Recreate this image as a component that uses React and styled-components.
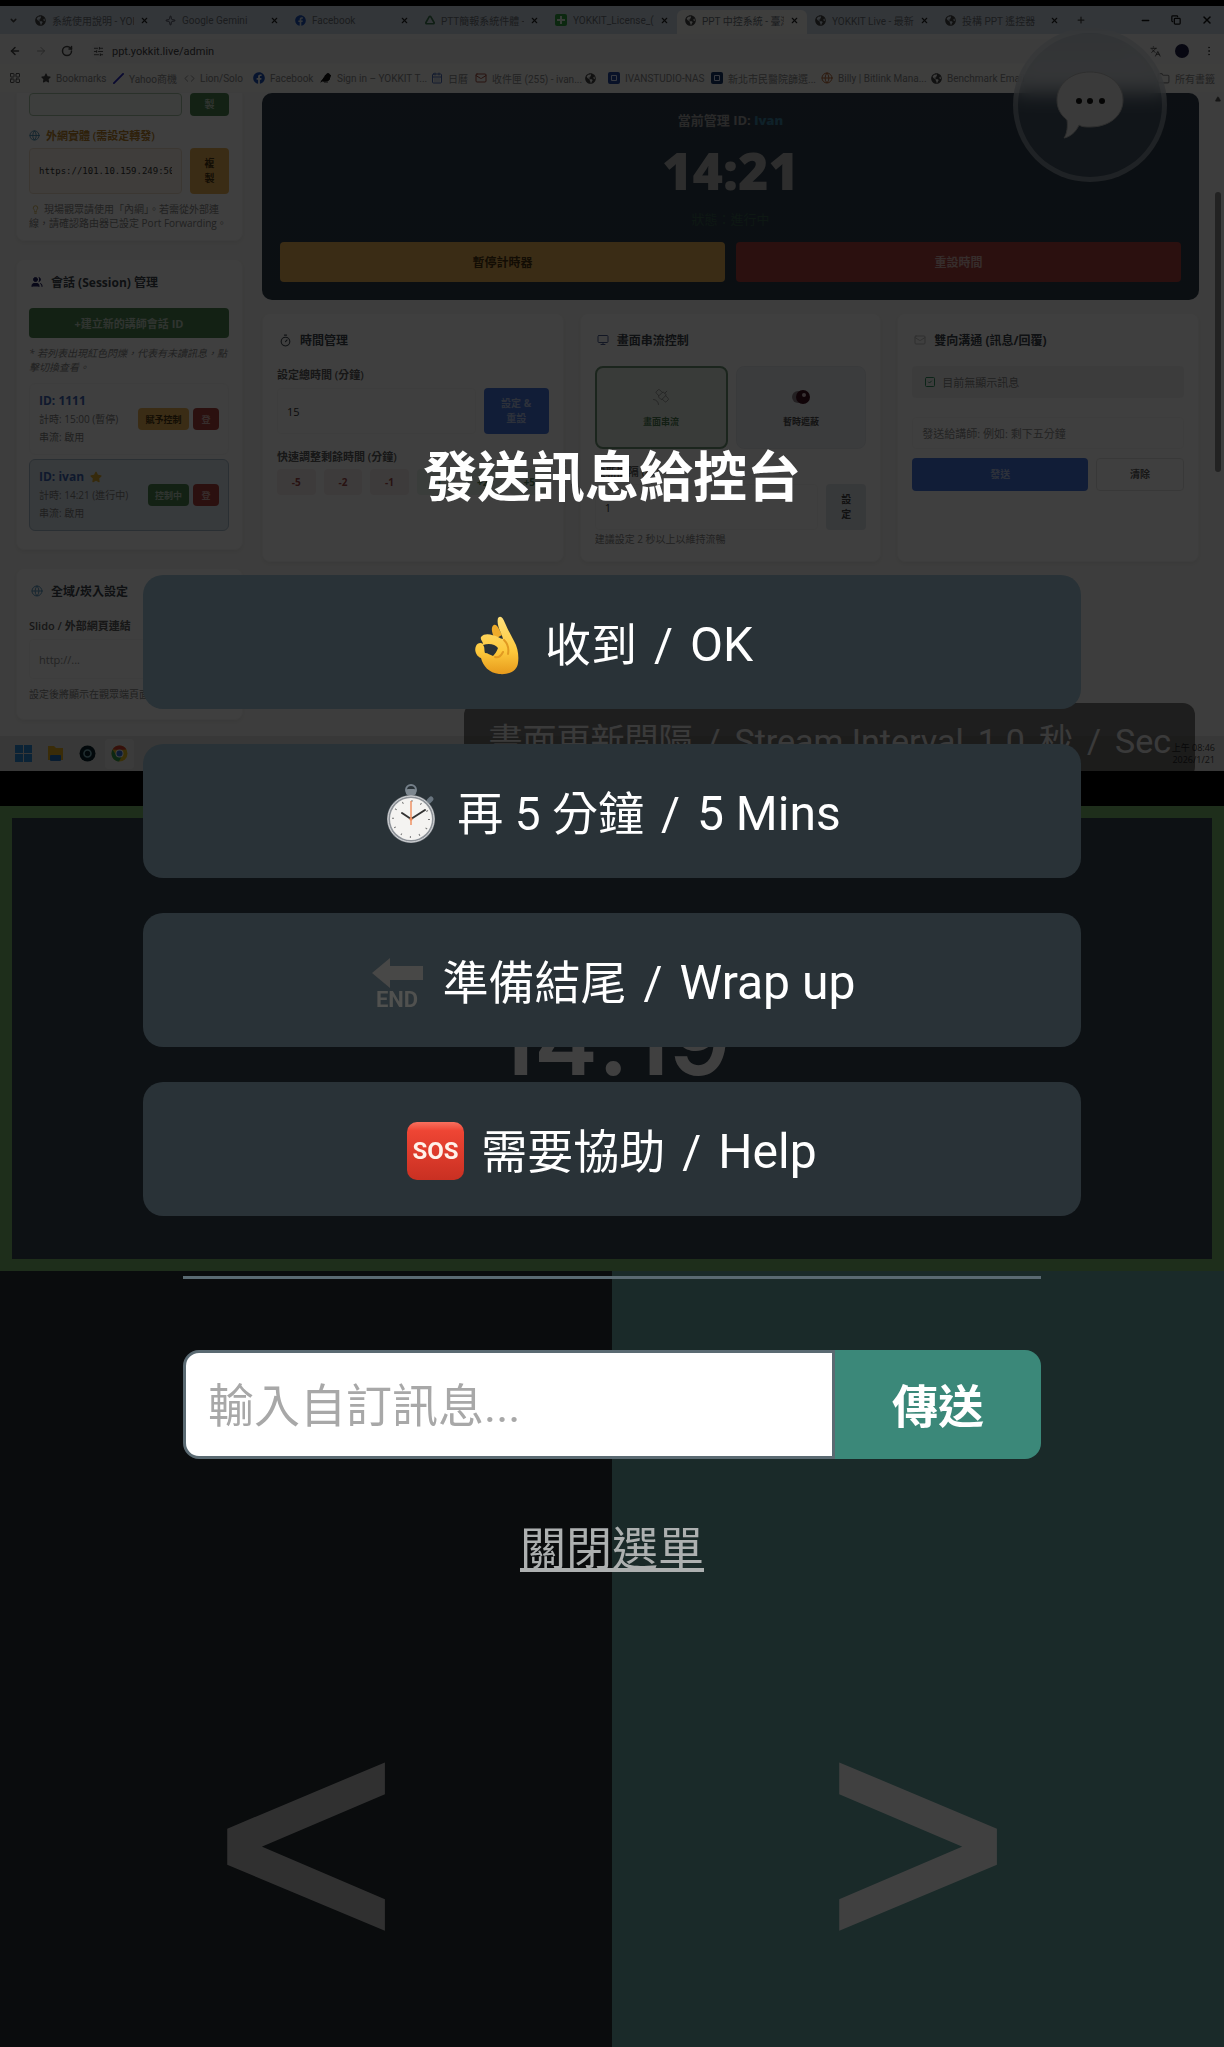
/* eslint-disable no-unused-vars */
import React from 'react'
import styled, { createGlobalStyle, css } from 'styled-components'
import {
  ArrowLeft, ArrowRight, RotateCw, SlidersHorizontal, X, Plus, Minus, Copy,
  ChevronDown, LayoutGrid, Globe, Folder, EllipsisVertical, Languages,
  Users, Timer, Monitor, Mail, Satellite, SquareCheck, Lightbulb, Triangle,
  Sparkle, CalendarDays, Slash, Code, Bird
} from 'lucide-react'
import { FaFacebook, FaGlobeAmericas, FaStar } from 'react-icons/fa'

const GlobalStyle = createGlobalStyle`
  * {
    box-sizing: border-box;
  }
  body {
    margin: 0;
    background: #000;
    font-family: Roboto, 'Noto Sans CJK TC', sans-serif;
  }
  button, input {
    font-family: inherit;
    margin: 0;
  }
  h1, h2, p {
    margin: 0;
  }
  svg {
    flex: none;
  }
`

const Page = styled.main`
  position: relative;
  min-height: 100vh;
  display: flex;
  flex-direction: column;
  padding-top: 6px;
  overflow: hidden;
`

/* ---------- streamed desktop ---------- */

const Stream = styled.section`
  position: relative;
  display: flex;
  flex-direction: column;
  background: #f3f3f2;
  font-family: 'Open Sans', 'Noto Sans CJK TC', sans-serif;
  font-size: 10px;
  color: #444;
`

const TabStrip = styled.div`
  display: flex;
  align-items: flex-end;
  height: 28px;
  background: #ccd8e4;
  font-family: Roboto, 'Noto Sans CJK TC', sans-serif;
`

const TabMenu = styled.div`
  width: 27px;
  height: 28px;
  display: flex;
  align-items: center;
  justify-content: center;
`

const Tab = styled.div`
  flex: 0 1 130px;
  min-width: 0;
  height: 24px;
  padding: 0 8px 4px 8px;
  display: flex;
  align-items: center;
  gap: 6px;
  border-radius: 6px 6px 0 0;
  color: #6c7278;
  ${({ $active }) => $active && css`
    background: #f6f6f4;
  `}
  span {
    flex: 1;
    overflow: hidden;
    white-space: nowrap;
  }
`

const WindowButtons = styled.div`
  margin-left: auto;
  height: 28px;
  padding-right: 11px;
  display: flex;
  align-items: center;
  gap: 20px;
`

const Toolbar = styled.div`
  display: flex;
  align-items: center;
  height: 30px;
  padding: 4px 9px 0;
  gap: 14px;
  background: #f4f4f4;
`

const Address = styled.div`
  flex: 1;
  height: 24px;
  margin-left: 4px;
  padding-left: 2px;
  display: flex;
  align-items: center;
  gap: 8px;
  border-radius: 12px;
  background: #eeeef0;
  font: 11px Roboto, sans-serif;
`

const Avatar = styled.span`
  width: 14px;
  height: 14px;
  border-radius: 50%;
  background: #1c1c44;
`

const Bookmarks = styled.div`
  display: flex;
  align-items: center;
  height: 28px;
  padding: 0 9px;
  background: #f6f6f4;
  font-family: Roboto, 'Noto Sans CJK TC', sans-serif;
  color: #888;
`

const Bookmark = styled.span`
  width: ${({ $w }) => ($w ? `${$w}px` : 'auto')};
  margin-left: ${({ $end }) => ($end ? 'auto' : '0')};
  display: flex;
  align-items: center;
  gap: 5px;
  white-space: nowrap;
`

const Desktop = styled.div`
  display: grid;
  grid-template-columns: 227px minmax(0, 1fr) 12px;
  height: 644px;
  padding-left: 16px;
  overflow: hidden;
`

const Sidebar = styled.div`
  display: flex;
  flex-direction: column;
  gap: 18px;
`

const Main = styled.div`
  display: flex;
  flex-direction: column;
  gap: 13px;
  padding: 1px 13px 0 19px;
`

const ScrollBar = styled.div`
  display: flex;
  flex-direction: column;
  align-items: center;
  padding: 4px 0;
  gap: 90px;
  &::after {
    content: '';
    width: 6px;
    height: 280px;
    border-radius: 3px;
    background: #888;
  }
`

const Card = styled.section`
  padding: 12px 13px 18px 12px;
  border-radius: 8px;
  border: 1px solid #f4f4f4;
  background: #fbfbfa;
  box-shadow: 0 2px 4px rgba(0, 0, 0, 0.06);
  ${({ $clipped }) => $clipped && css`
    height: 149px;
    padding-top: 0;
    border-radius: 0 0 8px 8px;
  `}
  ${({ $column }) => $column && css`
    height: 249px;
    padding: 16px 14px;
  `}
`

const CardTitle = styled.h2`
  display: flex;
  align-items: center;
  gap: 8px;
  height: 20px;
  padding-left: 2px;
  font-size: 12px;
  font-weight: 700;
  color: #3c444c;
  white-space: nowrap;
  margin-bottom: 16px;
`

const FieldLabel = styled.label`
  display: flex;
  align-items: center;
  gap: 6px;
  height: 16px;
  font-size: 11px;
  font-weight: 600;
  white-space: nowrap;
  color: ${({ $color }) => $color || '#5c5c5c'};
`

const Row = styled.div`
  display: flex;
  gap: 8px;
  margin-top: ${({ $top }) => $top || 0}px;
`

const Field = styled.input`
  flex: 1;
  min-width: 0;
  height: ${({ $h }) => $h || 46}px;
  padding: 0 9px;
  border: 1px solid ${({ $line }) => $line || '#f4f4f4'};
  border-radius: 4px;
  background: ${({ $fill }) => $fill || '#fbfbfa'};
  color: #333;
  font-size: ${({ $mono }) => ($mono ? 9 : 11)}px;
  ${({ $mono }) => $mono && css`
    font-family: 'DejaVu Sans Mono', monospace;
  `}
  &::placeholder {
    color: #8c8c8c;
    opacity: 1;
  }
`

const tones = {
  green: '#4c8450;color:#c0d0c0',
  yellow: '#e8b054;color:#4a3410',
  red: '#ac403c;color:#d8b4b0',
  blue: '#4474dc;color:#b4c4e8',
  slate: '#dce2e8;color:#444',
  pink: '#f4ebeb;color:#a04848',
  mint: '#e8f2ea;color:#508058',
  plain: '#fbfbfa;color:#5c5c5c'
}

const Action = styled.button`
  flex: ${({ $w }) => ($w ? `0 0 ${$w}px` : '1')};
  height: ${({ $h }) => $h}px;
  padding: 0 4px;
  border: ${({ $tone }) => ($tone === 'plain' ? '1px solid #e0e0e0' : '0')};
  border-radius: 4px;
  font-size: ${({ $size }) => $size || 10}px;
  font-weight: 700;
  line-height: 15px;
  background: ${({ $tone }) => tones[$tone]};
`

const Note = styled.p`
  margin-top: ${({ $top }) => $top || 8}px;
  font-size: 10px;
  line-height: 14px;
  color: #848484;
  font-style: ${({ $italic }) => ($italic ? 'italic' : 'normal')};
  overflow: hidden;
  ${({ $nowrap }) => $nowrap && 'white-space: nowrap;'}
  svg {
    vertical-align: -1px;
    margin: 0 4px 0 2px;
  }
`

const Session = styled.div`
  display: flex;
  align-items: center;
  gap: 4px;
  height: 72px;
  padding: 0 9px;
  margin-top: ${({ $top }) => $top}px;
  border: 1px solid ${({ $active }) => ($active ? '#a8bccc' : '#f4f4f4')};
  border-radius: 6px;
  background: ${({ $active }) => ($active ? '#dce6ee' : '#f9f9f9')};
`

const SessionInfo = styled.div`
  flex: 1;
  line-height: 18px;
  white-space: nowrap;
  color: #7c7c7c;
  strong {
    display: flex;
    align-items: center;
    gap: 6px;
    font-size: 12px;
    color: #3c64b4;
  }
`

const Banner = styled.section`
  height: 207px;
  padding: 18px;
  display: flex;
  flex-direction: column;
  align-items: center;
  border-radius: 10px;
  background: linear-gradient(#303e4c, #2c3c4a);
  color: #a4a4a4;
`

const BannerTitle = styled.p`
  font-size: 13px;
  line-height: 18px;
  font-weight: 700;
  b {
    color: #3c84a4;
  }
`

const Clock = styled.p`
  font-size: 52px;
  line-height: 64px;
  margin-top: 9px;
  font-weight: 800;
  color: #b4b4b4;
`

const Status = styled.p`
  font-size: 13px;
  line-height: 18px;
  margin-top: 8px;
  color: #38604c;
`

const BannerActions = styled.div`
  align-self: stretch;
  display: flex;
  gap: 11px;
  margin-top: 14px;
`

const Columns = styled.div`
  display: grid;
  grid-template-columns: repeat(3, minmax(0, 1fr));
  gap: 16px;
`

const Mode = styled.button`
  flex: 1;
  height: 83px;
  display: flex;
  flex-direction: column;
  align-items: center;
  justify-content: center;
  gap: 8px;
  border-radius: 8px;
  font-size: 9px;
  font-weight: 700;
  border: ${({ $on }) => ($on ? '2px solid #6c9474' : '1px solid #e4e8ec')};
  background: ${({ $on }) => ($on ? '#e4ebe3' : '#eceff3')};
  color: ${({ $on }) => ($on ? '#4c7c50' : '#4c4c4c')};
`

const Empty = styled.p`
  display: flex;
  align-items: center;
  gap: 6px;
  height: 32px;
  padding: 0 12px;
  border-radius: 4px;
  background: #f0f0f0;
  color: #848484;
  font-size: 11px;
`

const Taskbar = styled.div`
  display: flex;
  align-items: center;
  height: 35px;
  padding: 0 9px;
  gap: 3px;
  background: #e0dfdd;
`

const TaskIcon = styled.span`
  width: 29px;
  height: 30px;
  display: flex;
  align-items: center;
  justify-content: center;
  border-radius: 4px;
  background: ${({ $active }) => ($active ? '#ececec' : 'none')};
`

const TrayClock = styled.p`
  margin-left: auto;
  font-size: 9px;
  line-height: 12px;
  text-align: right;
`

const StreamBadge = styled.p`
  position: absolute;
  right: 29px;
  bottom: -8px;
  padding: 14px 24px;
  border-radius: 12px;
  background: rgba(0, 0, 0, 0.5);
  color: #e8e8e8;
  font: 34px/48px Roboto, 'Noto Sans CJK TC', sans-serif;
  display: flex;
  gap: 14px;
  white-space: nowrap;
`

const ChatButton = styled.button`
  position: absolute;
  top: 22px;
  right: 57px;
  width: 154px;
  height: 154px;
  display: flex;
  align-items: center;
  justify-content: center;
  border: 5px solid rgba(255, 255, 255, 0.3);
  border-radius: 50%;
  background: rgba(120, 140, 160, 0.3);
  backdrop-filter: blur(10px);
`

/* ---------- presenter controls ---------- */

const TimerPanel = styled.section`
  height: 465px;
  margin-top: 35px;
  display: flex;
  align-items: center;
  justify-content: center;
  border: 12px solid #78b86c;
  background: #344450;
`

const TimeLeft = styled.p`
  font: 600 96px/100px Inter, sans-serif;
  font-feature-settings: 'calt' 0;
  padding-top: 2px;
  color: #fff;
`

const SlideNav = styled.nav`
  flex: 1;
  display: grid;
  grid-template-columns: 1fr 1fr;
  min-height: 776px;
`

const SlideButton = styled.button`
  display: flex;
  justify-content: center;
  padding: 370px 0 0;
  border: 0;
  background: ${({ $next }) => ($next ? '#68a8a4' : '#283034')};
  color: ${({ $next }) => ($next ? '#fff' : '#c0c0c0')};
  font: 308px/400px 'Liberation Sans', sans-serif;
  -webkit-text-stroke: 8px currentColor;
`

/* ---------- message menu ---------- */

const Overlay = styled.div`
  position: absolute;
  inset: 0;
  display: flex;
  justify-content: center;
  padding-top: 448px;
  background: rgba(0, 0, 0, 0.75);
`

const Menu = styled.div`
  width: calc(100% - 64px);
  max-width: 938px;
  display: flex;
  flex-direction: column;
`

const MenuTitle = styled.h1`
  font-size: 54px;
  line-height: 62px;
  font-weight: 700;
  color: #fff;
  text-align: center;
`

const Replies = styled.div`
  display: grid;
  gap: 35px;
  margin-top: 65px;
`

const Reply = styled.button`
  height: 134px;
  padding: 6px 0 0;
  display: flex;
  align-items: center;
  justify-content: center;
  gap: 17px;
  border: 0;
  border-radius: 20px;
  background: #293237;
  color: #fff;
  font-size: 46px;
  line-height: 60px;
`

const English = styled.span`
  font-size: 48px;
`

const Custom = styled.form`
  margin: 60px 40px 0;
  padding-top: 71px;
  border-top: 3px solid #5a6a72;
  display: flex;
`

const MessageInput = styled.input`
  flex: 1;
  min-width: 0;
  height: 109px;
  padding: 2px 22px 0;
  border: 3px solid #5a6a72;
  border-radius: 16px 0 0 16px;
  background: #fff;
  font-size: 46px;
  &::placeholder {
    color: #a8a8a8;
    opacity: 1;
  }
`

const SendButton = styled.button`
  width: 206px;
  padding: 0 0 4px;
  border: 0;
  border-radius: 0 16px 16px 0;
  background: #3b8879;
  color: #fff;
  font-size: 46px;
  font-weight: 700;
`

const CloseButton = styled.button`
  align-self: center;
  margin-top: 63px;
  padding: 0;
  border: 0;
  background: none;
  color: #adb0b0;
  font-size: 46px;
  line-height: 54px;
  text-decoration: underline;
`

/* ---------- drawings ---------- */

const OkHand = () => (
  <svg width='57' height='60' viewBox='0 0 57 60' aria-hidden='true'>
    <defs>
      <linearGradient id='skin' x1='0' y1='0' x2='0' y2='1'>
        <stop offset='0' stopColor='#ffe07a' />
        <stop offset='0.6' stopColor='#fdc93c' />
        <stop offset='1' stopColor='#e79a1c' />
      </linearGradient>
    </defs>
    <path d='M24 24C20 17 20 11 23 10c3-1 5 4 8 10z' fill='#eeab2a' />
    <path
      fillRule='evenodd'
      fill='url(#skin)'
      d='M27 3c3-3 5 0 7 5 3 7 6 12 9 18 4 7 5 15 4 22-1 8-9 12-19 11C18 58 12 51 10 43 5 41 3 35 5 31c1-3 5-4 7-2 0-3-3-4-2-7 4-5 12-2 17 0 2 1 4 2 5 2-1-6-7-13-5-21zM12 30c2 2 1 5 2 8 3 0 5 2 8 3 2-2 4-5 5-8-3-4-9-5-15-3z'
    />
    <path d='M33 25c4 4 5 9 4 14M24 42c3 1 6-1 8-5' fill='none' stroke='#e19a22' strokeWidth='2' strokeLinecap='round' />
  </svg>
)

const StopWatch = () => (
  <svg width='57' height='60' viewBox='0 0 57 60' aria-hidden='true'>
    <circle cx='28' cy='6' r='5' fill='none' stroke='#75808a' strokeWidth='2' />
    <rect x='23' y='5' width='10' height='6' rx='2' fill='#7e8890' />
    <path d='M46 17l2-2' stroke='#68747e' strokeWidth='5' strokeLinecap='round' />
    <circle cx='28' cy='35' r='24' fill='#8d9298' />
    <circle cx='28' cy='35' r='23' fill='none' stroke='#d4d6d8' strokeWidth='1' />
    <circle cx='28' cy='35' r='21' fill='#f4f3f1' />
    <circle cx='28' cy='35' r='18' fill='none' stroke='#777' strokeWidth='2' strokeDasharray='1 8.42' />
    <path d='M28 35l-9-6M28 35l14-9' stroke='#333' strokeWidth='2' strokeLinecap='round' />
    <path d='M28 17v24' stroke='#ee8a5a' strokeWidth='1.4' />
    <circle cx='28' cy='35' r='1.6' fill='#ee8a5a' />
  </svg>
)

const EndArrow = () => (
  <svg width='57' height='60' viewBox='0 0 57 60' aria-hidden='true'>
    <path d='M3 20L21 5v8h33v14H21v8z' fill='#484847' />
    <text x='28' y='54' textAnchor='middle' fontFamily='Roboto, sans-serif' fontWeight='700' fontSize='22' fill='#50514f'>END</text>
  </svg>
)

const Sos = () => (
  <svg width='57' height='60' viewBox='0 0 57 60' aria-hidden='true'>
    <defs>
      <linearGradient id='sos' x1='0' y1='0' x2='0' y2='1'>
        <stop offset='0' stopColor='#f8705e' />
        <stop offset='0.15' stopColor='#ee4534' />
        <stop offset='1' stopColor='#c93022' />
      </linearGradient>
    </defs>
    <rect x='0' y='0' width='57' height='58' rx='10' fill='url(#sos)' />
    <text x='28.5' y='37' textAnchor='middle' fontFamily='Roboto, sans-serif' fontWeight='700' fontSize='24' fill='#fff2ea'>SOS</text>
  </svg>
)

const Bubble = () => (
  <svg width='68' height='68' viewBox='0 0 68 68' aria-hidden='true'>
    <path d='M34 1c19 0 33 12 33 28S53 56 34 56c-4 0-8 0-11-2C20 61 14 66 8 67c3-4 4-12 3-18C5 44 1 38 1 29 1 13 15 1 34 1z' fill='#e8e8e6' stroke='#b8b8b8' />
    <circle cx='23' cy='30' r='3' fill='#111' />
    <circle cx='34' cy='30' r='3' fill='#111' />
    <circle cx='46' cy='30' r='3' fill='#111' />
  </svg>
)

const WindowsLogo = () => (
  <svg width='17' height='17' viewBox='0 0 17 17' fill='#2c8cd8' aria-hidden='true'>
    <path d='M0 0h8v8H0zM9 0h8v8H9zM0 9h8v8H0zM9 9h8v8H9z' />
  </svg>
)

const Explorer = () => (
  <svg width='17' height='17' viewBox='0 0 17 17' aria-hidden='true'>
    <path d='M1 1h6l2 2h7v12H1z' fill='#e8b020' />
    <rect x='3' y='10' width='11' height='6' rx='1' fill='#2070c0' />
  </svg>
)

const Swirl = () => (
  <svg width='17' height='17' viewBox='0 0 17 17' aria-hidden='true'>
    <circle cx='8.5' cy='8.5' r='8' fill='#08222c' />
    <circle cx='8.5' cy='8.5' r='3.5' fill='none' stroke='#7cb0bc' strokeWidth='1.6' />
  </svg>
)

const ChromeLogo = () => (
  <svg width='17' height='17' viewBox='0 0 17 17' aria-hidden='true'>
    <circle cx='8.5' cy='8.5' r='8' fill='#e8c020' />
    <path d='M1.6 4.5A8 8 0 0 1 15.4 4.5L8.5 5z' fill='#d84030' />
    <path d='M1.6 4.5A8 8 0 0 0 8 16.5l3.5-6.5H5z' fill='#30a050' />
    <circle cx='8.5' cy='8.5' r='4' fill='#fff' />
    <circle cx='8.5' cy='8.5' r='3' fill='#3070d8' />
  </svg>
)

const Tile = ({ color }) => (
  <svg width='12' height='12' viewBox='0 0 12 12' aria-hidden='true'>
    <rect width='12' height='12' rx='2' fill={color} />
    <path d='M3.5 3.5h5v5h-5z' fill='none' stroke='#dde8ff' />
  </svg>
)

const Sheet = () => (
  <svg width='12' height='12' viewBox='0 0 12 12' aria-hidden='true'>
    <rect width='12' height='12' rx='2' fill='#30a040' />
    <path d='M6 2v8M2 6h8' stroke='#e0f0e0' strokeWidth='2' />
  </svg>
)

const GlobeDot = () => <FaGlobeAmericas size={11} color='#444' />

const tabs = [
  { icon: <GlobeDot />, title: '系統使用說明 - YOK' },
  { icon: <Sparkle size={11} color='#445' />, title: 'Google Gemini' },
  { icon: <FaFacebook size={11} color='#1c50b8' />, title: 'Facebook' },
  { icon: <Triangle size={10} color='#3c7850' strokeWidth={4} />, title: 'PTT簡報系統件體 -' },
  { icon: <Sheet />, title: 'YOKKIT_License_(T' },
  { icon: <GlobeDot />, title: 'PPT 中控系統 - 臺灣', active: true },
  { icon: <GlobeDot />, title: 'YOKKIT Live - 最新' },
  { icon: <GlobeDot />, title: '投構 PPT 遙控器' }
]

const bookmarks = [
  { w: 72, icon: <FaStar size={10} color='#444' />, title: 'Bookmarks' },
  { w: 71, icon: <Slash size={11} color='#2828c0' strokeWidth={4} />, title: 'Yahoo商機' },
  { w: 69, icon: <Code size={11} color='#888' />, title: 'Lion/Solo' },
  { w: 67, icon: <FaFacebook size={12} color='#1c50b8' />, title: 'Facebook' },
  { w: 111, icon: <Bird size={12} color='#111' fill='#111' />, title: 'Sign in – YOKKIT T...' },
  { w: 44, icon: <CalendarDays size={12} color='#4c6cb8' />, title: '日曆' },
  { w: 110, icon: <Mail size={12} color='#a04838' />, title: '收件匣 (255) - ivan...' },
  { w: 23, icon: <GlobeDot />, title: '' },
  { w: 103, icon: <Tile color='#2448a0' />, title: 'IVANSTUDIO-NAS' },
  { w: 110, icon: <Tile color='#143468' />, title: '新北市民醫院篩選...' },
  { w: 110, icon: <Globe size={12} color='#b86838' />, title: 'Billy | Bitlink Mana...' },
  { w: 90, icon: <GlobeDot />, title: 'Benchmark Email' }
]

const replies = [
  { icon: <OkHand />, zh: '收到', en: 'OK' },
  { icon: <StopWatch />, zh: '再 5 分鐘', en: '5 Mins' },
  { icon: <EndArrow />, zh: '準備結尾', en: 'Wrap up' },
  { icon: <Sos />, zh: '需要協助', en: 'Help' }
]

const Browser = () => (
  <>
    <TabStrip>
      <TabMenu><ChevronDown size={9} strokeWidth={4} /></TabMenu>
      {tabs.map(({ icon, title, active }) => (
        <Tab key={title} $active={active}>
          {icon}
          <span>{title}</span>
          <X size={9} strokeWidth={3} color='#222' />
        </Tab>
      ))}
      <TabMenu><Plus size={10} strokeWidth={3} /></TabMenu>
      <WindowButtons>
        <Minus size={11} color='#111' strokeWidth={3} />
        <Copy size={10} color='#111' strokeWidth={3} />
        <X size={12} color='#111' strokeWidth={3} />
      </WindowButtons>
    </TabStrip>
    <Toolbar>
      <ArrowLeft size={12} strokeWidth={3} />
      <ArrowRight size={12} color='#999' />
      <RotateCw size={12} strokeWidth={3} />
      <Address>
        <SlidersHorizontal size={11} />
        ppt.yokkit.live/admin
      </Address>
      <Languages size={11} />
      <Avatar />
      <EllipsisVertical size={12} />
    </Toolbar>
    <Bookmarks>
      <Bookmark $w={32}><LayoutGrid size={12} color='#555' /></Bookmark>
      {bookmarks.map(({ w, icon, title }) => (
        <Bookmark key={w + title} $w={w}>{icon}{title}</Bookmark>
      ))}
      <Bookmark $end><Folder size={13} />所有書籤</Bookmark>
    </Bookmarks>
  </>
)

const SidePanel = () => (
  <Sidebar>
    <Card $clipped>
      <Row>
        <Field aria-label='內網' $h={23} $line='#a8c4a8' $fill='#f4f8f4' />
        <Action $tone='green' $w={39} $h={23}>製</Action>
      </Row>
      <Row $top={11}>
        <FieldLabel htmlFor='wan' $color='#b88028'>
          <Globe size={11} color='#4c90b4' />外網實體 (需設定轉發)
        </FieldLabel>
      </Row>
      <Row $top={5}>
        <Field id='wan' $mono $line='#ecdcc8' $fill='#faf3ec' defaultValue='https://101.10.159.249:5000/s' />
        <Action $tone='yellow' $w={39} $h={46}>複<br />製</Action>
      </Row>
      <Note>
        <Lightbulb size={9} color='#c8a030' />現場觀眾請使用「內網」。若需從外部連線，請確認路由器已設定 Port Forwarding。
      </Note>
    </Card>
    <Card>
      <CardTitle><Users size={12} color='#202060' fill='#202060' />會話 (Session) 管理</CardTitle>
      <Row><Action $tone='green' $h={30} $size={11}>+建立新的講師會話 ID</Action></Row>
      <Note $italic>* 若列表出現紅色閃爍，代表有未讀訊息，點擊切換查看。</Note>
      <Session $top={9}>
        <SessionInfo>
          <strong>ID: 1111</strong>
          計時: 15:00 (暫停)<br />串流: 啟用
        </SessionInfo>
        <Action $tone='yellow' $w={51} $h={22} $size={9}>賦予控制</Action>
        <Action $tone='red' $w={26} $h={22} $size={9}>登</Action>
      </Session>
      <Session $active $top={4}>
        <SessionInfo>
          <strong>ID: ivan <FaStar size={12} color='#d8a830' /></strong>
          計時: 14:21 (進行中)<br />串流: 啟用
        </SessionInfo>
        <Action $tone='green' $w={41} $h={22} $size={9}>控制中</Action>
        <Action $tone='red' $w={26} $h={22} $size={9}>登</Action>
      </Session>
    </Card>
    <Card>
      <CardTitle><Globe size={12} color='#5c98c0' />全域/崁入設定</CardTitle>
      <FieldLabel htmlFor='slido'>Slido / 外部網頁連結</FieldLabel>
      <Row $top={6}><Field id='slido' $h={40} placeholder='http://...' /></Row>
      <Note $nowrap>設定後將顯示在觀眾端頁面</Note>
    </Card>
  </Sidebar>
)

const Dashboard = () => (
  <Main>
    <Banner>
      <BannerTitle>當前管理 ID: <b>ivan</b></BannerTitle>
      <Clock>14:21</Clock>
      <Status>狀態：進行中</Status>
      <BannerActions>
        <Action $tone='yellow' $h={40} $size={12}>暫停計時器</Action>
        <Action $tone='red' $h={40} $size={12}>重設時間</Action>
      </BannerActions>
    </Banner>
    <Columns>
      <Card $column>
        <CardTitle><Timer size={13} />時間管理</CardTitle>
        <FieldLabel htmlFor='total'>設定總時間 (分鐘)</FieldLabel>
        <Row $top={6}>
          <Field id='total' defaultValue='15' />
          <Action $tone='blue' $w={65} $h={46}>設定 &amp;<br />重設</Action>
        </Row>
        <Row $top={14}><FieldLabel as='p'>快速調整剩餘時間 (分鐘)</FieldLabel></Row>
        <Row $top={5}>
          {['-5', '-2', '-1', '+1', '+2', '+5'].map(step => (
            <Action key={step} $tone={step[0] === '-' ? 'pink' : 'mint'} $h={26}>{step}</Action>
          ))}
        </Row>
      </Card>
      <Card $column>
        <CardTitle><Monitor size={12} color='#4c5c90' />畫面串流控制</CardTitle>
        <Row>
          <Mode $on><Satellite size={20} color='#888' strokeWidth={1} />畫面串流</Mode>
          <Mode>
            <svg width='20' height='20' viewBox='0 0 20 20' aria-hidden='true'>
              <circle cx='7' cy='10' r='6' fill='#8c8088' />
              <circle cx='12' cy='10' r='7' fill='#401020' />
              <circle cx='13' cy='8' r='2' fill='#e0c8d0' />
            </svg>
            暫時遮蔽
          </Mode>
        </Row>
        <Row $top={14}><FieldLabel htmlFor='interval'>更新間隔 (秒)</FieldLabel></Row>
        <Row $top={5}>
          <Field id='interval' defaultValue='1' />
          <Action $tone='slate' $w={40} $h={46}>設<br />定</Action>
        </Row>
        <Note $top={2}>建議設定 2 秒以上以維持流暢</Note>
      </Card>
      <Card $column>
        <CardTitle><Mail size={12} color='#bbb' />雙向溝通 (訊息/回覆)</CardTitle>
        <Empty><SquareCheck size={12} color='#309060' />目前無顯示訊息</Empty>
        <Row $top={19}><Field $h={32} aria-label='訊息' placeholder='發送給講師: 例如: 剩下五分鐘' /></Row>
        <Row $top={9}>
          <Action $tone='blue' $h={33}>發送</Action>
          <Action $tone='plain' $w={88} $h={33}>清除</Action>
        </Row>
      </Card>
    </Columns>
  </Main>
)

const App = () => (
  <Page>
    <GlobalStyle />
    <Stream>
      <Browser />
      <Desktop>
        <SidePanel />
        <Dashboard />
        <ScrollBar><Triangle size={6} fill='#555' color='#555' /></ScrollBar>
      </Desktop>
      <Taskbar>
        <TaskIcon><WindowsLogo /></TaskIcon>
        <TaskIcon><Explorer /></TaskIcon>
        <TaskIcon><Swirl /></TaskIcon>
        <TaskIcon $active><ChromeLogo /></TaskIcon>
        <TaskIcon><Slash size={15} /></TaskIcon>
        <TrayClock>上午 08:46<br />2026/1/21</TrayClock>
      </Taskbar>
      <ChatButton aria-label='訊息選單'><Bubble /></ChatButton>
      <StreamBadge>
        <span>畫面更新間隔</span>
        <span>/</span>
        <span>Stream Interval</span>
        <span>1.0</span>
        <span>秒</span>
        <span>/</span>
        <span>Sec</span>
      </StreamBadge>
    </Stream>
    <TimerPanel><TimeLeft>14:19</TimeLeft></TimerPanel>
    <SlideNav>
      <SlideButton>&lt;</SlideButton>
      <SlideButton $next>&gt;</SlideButton>
    </SlideNav>
    <Overlay>
      <Menu role='dialog' aria-labelledby='menu-title'>
        <MenuTitle id='menu-title'>發送訊息給控台</MenuTitle>
        <Replies>
          {replies.map(({ icon, zh, en }) => (
            <Reply key={en}>
              {icon}
              <span>{zh}</span>
              <span>/</span>
              <English>{en}</English>
            </Reply>
          ))}
        </Replies>
        <Custom onSubmit={e => e.preventDefault()}>
          <MessageInput aria-label='輸入自訂訊息' placeholder='輸入自訂訊息...' />
          <SendButton>傳送</SendButton>
        </Custom>
        <CloseButton>關閉選單</CloseButton>
      </Menu>
    </Overlay>
  </Page>
)

export default App
